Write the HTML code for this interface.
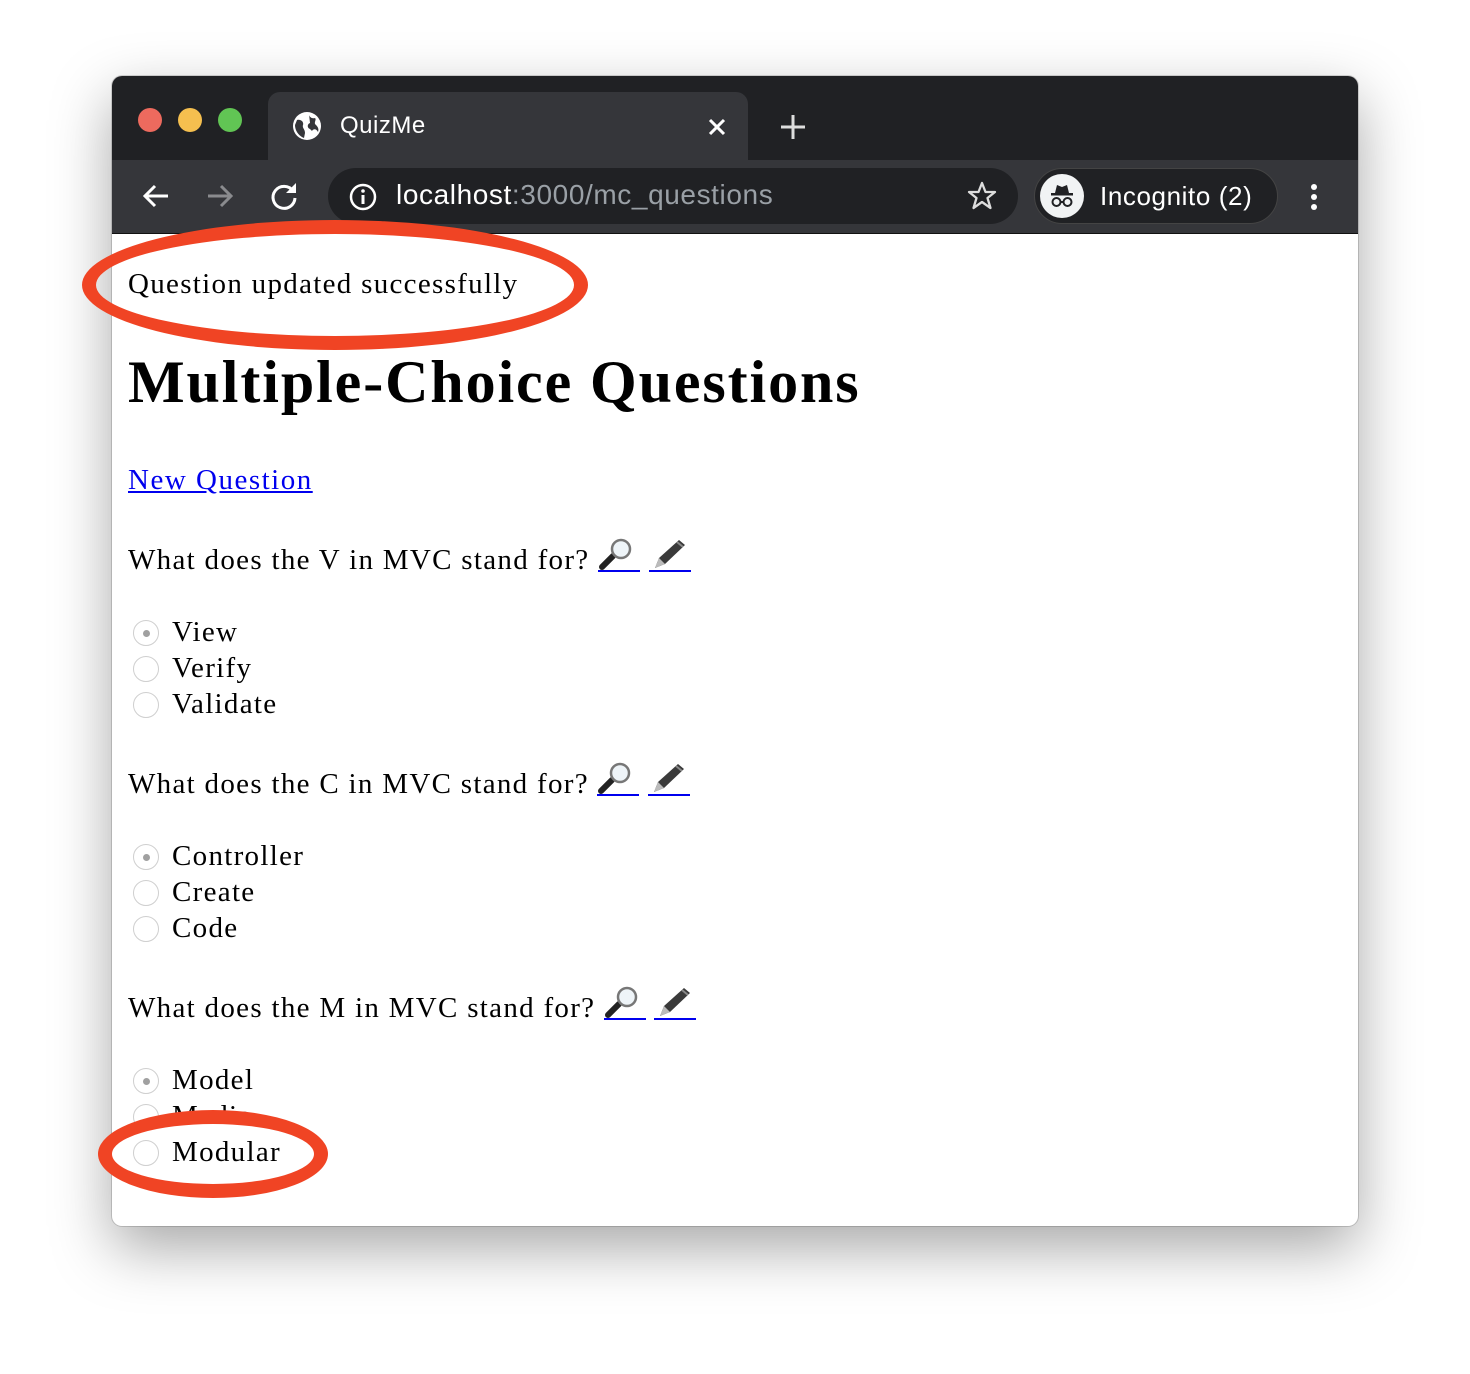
<!DOCTYPE html>
<html><head><meta charset="utf-8"><style>
body{margin:0;width:1470px;height:1374px;background:#fff;position:relative;overflow:hidden;font-family:"Liberation Serif",serif;}
.win{position:absolute;left:112px;top:76px;width:1246px;height:1150px;border-radius:10px;overflow:hidden;background:#fff;box-shadow:0 22px 60px rgba(0,0,0,0.35),0 0 0 1px rgba(0,0,0,0.15);}
.tabbar{position:absolute;left:0;top:0;width:100%;height:84px;background:#202124;}
.toolbar{position:absolute;left:0;top:84px;width:100%;height:74px;background:#35363a;}
.tab{position:absolute;left:156px;top:16px;width:480px;height:70px;background:#35363a;border-radius:12px 12px 0 0;}
.dot{position:absolute;top:32px;width:24px;height:24px;border-radius:50%;}
.ui{font-family:"Liberation Sans",sans-serif;color:#fff;position:absolute;}
.t{position:absolute;font-size:29px;line-height:29px;color:#000;white-space:nowrap;letter-spacing:1.3px;}
.r{position:absolute;left:21px;width:26px;height:26px;border:1px solid #cfcfcf;border-radius:50%;background:#fff;box-sizing:border-box;}
.r.c::after{content:"";position:absolute;left:9px;top:9px;width:7px;height:7px;border-radius:50%;background:#a0a0a0;}
a{color:#0000ee;}
a.ic{display:inline-block;width:42px;height:0;vertical-align:-3px;position:relative;border-bottom:2px solid #0000ee;}
a.ic svg{position:absolute;left:0;top:-32px;}
.ell{position:absolute;border:14px solid #f04424;border-radius:50%;box-sizing:border-box;}
</style></head><body>
<svg width="0" height="0" style="position:absolute">
 <defs>
  <g id="mag"><line x1="4" y1="29" x2="15" y2="18" stroke="#222" stroke-width="6" stroke-linecap="round"/><circle cx="23" cy="11" r="9" fill="#eef4f8" stroke="#777" stroke-width="2.5"/></g>
  <g id="pen"><path d="M6 30 L10 20 L30 2 L36 7 L16 26 Z" fill="#3a3a3a"/><path d="M10 20 L16 26 L6 30 Z" fill="#bbb"/><path d="M28 4 L34 9" stroke="#888" stroke-width="2"/></g>
 </defs>
</svg>
<div class="win">
 <div class="tabbar">
  <div class="dot" style="left:26px;background:#ed6a5e"></div>
  <div class="dot" style="left:66px;background:#f5bf4f"></div>
  <div class="dot" style="left:106px;background:#61c554"></div>
  <div class="tab">
   <svg style="position:absolute;left:24px;top:19px" width="30" height="30" viewBox="0 0 30 30"><circle cx="15" cy="15" r="14" fill="#fff"/><path d="M5 9 C9 8 12 11 11 14 C10 17 13 18 13 22 L12 27 C7 25 3 20 3 14Z M17 3 C17 6 20 8 23 7 C25 9 21 12 24 14 C26 16 27 18 26 21 C24 17 21 18 20 20 L18 18 C15 17 15 13 18 12 Z" fill="#35363a"/></svg>
   <div class="ui" style="left:72px;top:20px;font-size:24px;letter-spacing:0.5px">QuizMe</div>
   <svg style="position:absolute;left:440px;top:26px" width="18" height="18" viewBox="0 0 18 18" stroke="#fff" stroke-width="3"><path d="M2 2L16 16M16 2L2 16"/></svg>
  </div>
  <svg style="position:absolute;left:668px;top:38px" width="26" height="26" viewBox="0 0 26 26" stroke="#ddd" stroke-width="3"><path d="M13 1V25M1 13H25"/></svg>
 </div>
 <div class="toolbar">
  <svg style="position:absolute;left:28px;top:20px" width="32" height="32" viewBox="0 0 32 32" fill="none" stroke="#fff" stroke-width="3"><path d="M28 16H6M15 6L5 16L15 26"/></svg>
  <svg style="position:absolute;left:92px;top:20px" width="32" height="32" viewBox="0 0 32 32" fill="none" stroke="#8a8b8e" stroke-width="3"><path d="M4 16H26M17 6L27 16L17 26"/></svg>
  <svg style="position:absolute;left:156px;top:20px" width="32" height="32" viewBox="0 0 32 32" fill="none" stroke="#fff" stroke-width="3"><path d="M25 11A11 11 0 1 0 27 18"/><path d="M28 3L28 13L18 13Z" fill="#fff" stroke="none"/></svg>
  <div style="position:absolute;left:216px;top:8px;width:690px;height:56px;border-radius:28px;background:#202124"></div>
  <svg style="position:absolute;left:236px;top:22px" width="30" height="30" viewBox="0 0 30 30"><circle cx="15" cy="15" r="12" fill="none" stroke="#fff" stroke-width="2.5"/><rect x="13.5" y="13" width="3" height="9" fill="#fff"/><circle cx="15" cy="9" r="1.8" fill="#fff"/></svg>
  <div class="ui" style="left:284px;top:19px;font-size:28px;letter-spacing:0.6px">localhost<span style="color:#9aa0a6">:3000/mc_questions</span></div>
  <svg style="position:absolute;left:855px;top:21px" width="30" height="30" viewBox="0 0 30 30"><path d="M15 2L18.5 11H28L20.5 17L23.5 27L15 21L6.5 27L9.5 17L2 11H11.5Z" fill="none" stroke="#ddd" stroke-width="2.3" stroke-linejoin="round"/></svg>
  <div style="position:absolute;left:922px;top:8px;width:244px;height:56px;border-radius:28px;background:#202124;border:1px solid #444;box-sizing:border-box"></div>
  <div style="position:absolute;left:928px;top:14px;width:44px;height:44px;border-radius:50%;background:#f1f3f4"></div>
  <svg style="position:absolute;left:932px;top:18px" width="36" height="36" viewBox="0 0 36 36"><path d="M11 15 L13 7 L18 9 L23 7 L25 15Z" fill="#202124"/><rect x="7" y="15" width="22" height="2.5" fill="#202124"/><circle cx="12.5" cy="24" r="4" fill="none" stroke="#202124" stroke-width="2"/><circle cx="23.5" cy="24" r="4" fill="none" stroke="#202124" stroke-width="2"/><path d="M16.5 24h3" stroke="#202124" stroke-width="2"/></svg>
  <div class="ui" style="left:988px;top:21px;font-size:26px;letter-spacing:0.6px">Incognito (2)</div>
  <div style="position:absolute;left:1199px;top:24px;width:6px;height:6px;border-radius:50%;background:#fff;box-shadow:0 10px 0 #fff,0 20px 0 #fff"></div>
 </div>
 <div style="position:absolute;left:0;top:157px;width:100%;height:1px;background:#111"></div>

 <div class="t" style="left:16px;top:194px">Question updated successfully</div>
 <div class="t" style="left:16px;top:276px;font-size:60px;line-height:60px;font-weight:bold;letter-spacing:1.9px">Multiple-Choice Questions</div>
 <div class="t" style="left:16px;top:390px;letter-spacing:1.5px"><a href="#">New Question</a></div>

 <div class="t" style="left:16px;top:470px">What does the V in MVC stand for? <a class="ic" href="#"><svg width="40" height="34"><use href="#mag"/></svg></a> <a class="ic" href="#"><svg width="40" height="34"><use href="#pen"/></svg></a></div>
 <div class="r c" style="top:544px"></div><div class="t" style="left:60px;top:542px">View</div>
 <div class="r" style="top:580px"></div><div class="t" style="left:60px;top:578px">Verify</div>
 <div class="r" style="top:616px"></div><div class="t" style="left:60px;top:614px">Validate</div>

 <div class="t" style="left:16px;top:694px">What does the C in MVC stand for? <a class="ic" href="#"><svg width="40" height="34"><use href="#mag"/></svg></a> <a class="ic" href="#"><svg width="40" height="34"><use href="#pen"/></svg></a></div>
 <div class="r c" style="top:768px"></div><div class="t" style="left:60px;top:766px">Controller</div>
 <div class="r" style="top:804px"></div><div class="t" style="left:60px;top:802px">Create</div>
 <div class="r" style="top:840px"></div><div class="t" style="left:60px;top:838px">Code</div>

 <div class="t" style="left:16px;top:918px">What does the M in MVC stand for? <a class="ic" href="#"><svg width="40" height="34"><use href="#mag"/></svg></a> <a class="ic" href="#"><svg width="40" height="34"><use href="#pen"/></svg></a></div>
 <div class="r c" style="top:992px"></div><div class="t" style="left:60px;top:990px">Model</div>
 <div class="r" style="top:1028px"></div><div class="t" style="left:60px;top:1026px">Media</div>
</div>
<div class="ell" style="left:82px;top:220px;width:506px;height:130px"></div>
<div class="ell" style="left:98px;top:1110px;width:230px;height:88px;background:#fff"></div>
<div class="r" style="left:133px;top:1140px"></div>
<div class="t" style="left:172px;top:1138px">Modular</div>
</body></html>
